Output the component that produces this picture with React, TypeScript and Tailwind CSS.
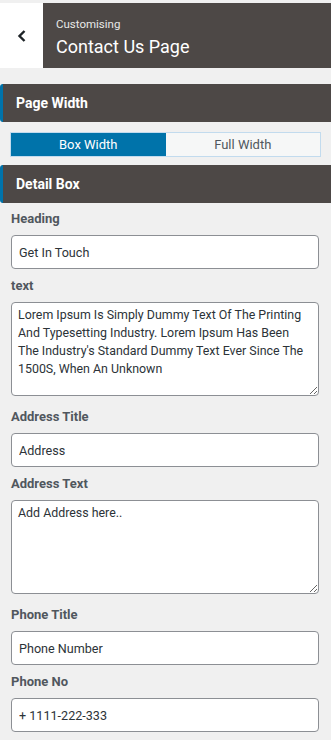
import React from "react";

const fields = [
  { label: "Heading", value: "Get In Touch", area: false },
  {
    label: "text",
    value:
      "Lorem Ipsum Is Simply Dummy Text Of The Printing And Typesetting Industry. Lorem Ipsum Has Been The Industry's Standard Dummy Text Ever Since The 1500S, When An Unknown",
    area: true,
  },
  { label: "Address Title", value: "Address", area: false },
  { label: "Address Text", value: "Add Address here..", area: true },
  { label: "Phone Title", value: "Phone Number", area: false },
  { label: "Phone No", value: "+ 1111-222-333", area: false },
];

function SectionBar({ title }: { title: string }) {
  return (
    <div className="flex h-[38px] items-center rounded-l-[3px] border-l-[3px] border-[#0073aa] bg-[#4d4846] pl-[13px]">
      <span className="text-[14px] font-bold text-white">{title}</span>
    </div>
  );
}

export default function App() {
  return (
    <div
      className="min-h-[740px] w-[331px] bg-[#f0f0f0] pt-[3px]"
      style={{ fontFamily: "Roboto, 'Liberation Sans', sans-serif" }}
    >
      {/* Header */}
      <div className="flex h-[65px]">
        <button className="flex w-[43px] items-center justify-center bg-white">
          <svg width="10" height="14" viewBox="0 0 10 14" fill="none">
            <path d="M7.5 2 L2.5 7 L7.5 12" stroke="#1d2327" strokeWidth="2.4" />
          </svg>
        </button>
        <div className="flex flex-1 flex-col justify-center bg-[#4d4846] pl-[13px] pt-[2px]">
          <span className="text-[11.5px] leading-[14px] text-[#e8e8e8]">Customising</span>
          <span className="mt-[5px] text-[18px] leading-[21px] text-white">Contact Us Page</span>
        </div>
      </div>

      <div className="mt-[16px]">
        <SectionBar title="Page Width" />
      </div>

      {/* Toggle */}
      <div className="mx-[10px] mb-[8px] mt-[10px] flex h-[25px] border border-[#c2dbee] text-[13px]">
        <button className="flex-1 bg-[#0073aa] text-white">Box Width</button>
        <button className="flex-1 bg-[#f6f7f7] text-[#50575e]">Full Width</button>
      </div>

      <SectionBar title="Detail Box" />

      {/* Fields */}
      <div className="px-[11px] pt-[6px]">
        {fields.map((f) => (
          <div key={f.label} className={f.area ? "mb-[11px]" : "mb-[7px]"}>
            <div className="mb-[6px] text-[13px] font-bold leading-[20px] text-[#50575e]">{f.label}</div>
            {f.area ? (
              <textarea
                defaultValue={f.value}
                className="block h-[94px] w-[308px] rounded-[4px] border border-[#8c8f94] bg-white py-[3px] pl-[6px] pr-[10px] text-[12.4px] leading-[18px] text-[#2c3338] outline-none"
              />
            ) : (
              <input
                defaultValue={f.value}
                className="block h-[34px] w-[308px] rounded-[4px] border border-[#8c8f94] bg-white px-[7px] text-[12.6px] text-[#2c3338] outline-none"
              />
            )}
          </div>
        ))}
      </div>
    </div>
  );
}
